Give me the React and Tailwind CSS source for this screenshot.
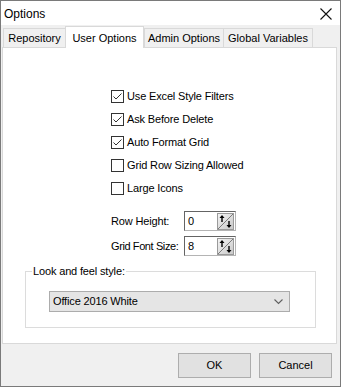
import React from "react";

function Check({ checked }) {
  return (
    <span className="w-[13px] h-[13px] border border-[#333333] bg-white flex items-center justify-center shrink-0">
      {checked && (
        <svg width="11" height="11" viewBox="0 0 11 11">
          <path d="M1.5 5.5 L4 8 L9.5 2.5" fill="none" stroke="#333333" strokeWidth="1" />
        </svg>
      )}
    </span>
  );
}

function Spinner() {
  return (
    <svg width="17" height="17" viewBox="0 0 17 17" className="shrink-0">
      <defs>
        <linearGradient id="sg" x1="0" y1="0" x2="1" y2="1">
          <stop offset="0" stopColor="#f4f4f4" />
          <stop offset="1" stopColor="#c8c8c8" />
        </linearGradient>
      </defs>
      <rect x="0.5" y="0.5" width="16" height="16" fill="url(#sg)" stroke="#9a9a9a" />
      <line x1="1" y1="16" x2="16" y2="1" stroke="#7a7a7a" strokeWidth="1" />
      <path d="M5 9 V3" stroke="#000" strokeWidth="1.4" />
      <path d="M2.5 5 L5 2 L7.5 5 Z" fill="#000" />
      <path d="M12 8 V14" stroke="#000" strokeWidth="1.4" />
      <path d="M9.5 12 L12 15 L14.5 12 Z" fill="#000" />
    </svg>
  );
}

function NumBox({ value }) {
  return (
    <div className="w-[52px] h-[20px] bg-white border border-[#646464] border-r-[#b4b4b4] border-b-[#b4b4b4] flex items-center justify-between pl-[3px] pr-[1px]">
      <span>{value}</span>
      <Spinner />
    </div>
  );
}

export default function App() {
  const checks = [
    ["Use Excel Style Filters", true],
    ["Ask Before Delete", true],
    ["Auto Format Grid", true],
    ["Grid Row Sizing Allowed", false],
    ["Large Icons", false],
  ];
  return (
    <div className="w-[341px] h-[387px] bg-[#f0f0f0] border border-[#7a7a7a] flex flex-col font-['Liberation_Sans',Arial,sans-serif] text-[11px] text-black overflow-hidden">
      {/* Title bar */}
      <div className="h-[24px] bg-white flex items-center justify-between pl-[3px] pr-[8px] shrink-0">
        <span className="text-[12px] leading-none mt-[1px]">Options</span>
        <svg width="12" height="12" viewBox="0 0 12 12" className="mt-[2px]">
          <path d="M0.5 0.5 L11.5 11.5 M11.5 0.5 L0.5 11.5" stroke="#111" strokeWidth="1.1" />
        </svg>
      </div>

      {/* Tabs */}
      <div className="flex items-end h-[22px] pl-[2px] relative z-10 shrink-0 whitespace-nowrap">
        <div className="w-[63px] h-[19px] border border-b-0 border-[#d9d9d9] bg-[#f0f0f0] flex items-center justify-center">Repository</div>
        <div className="w-[79px] h-[22px] -ml-[1px] -mb-[1px] border border-b-0 border-[#d9d9d9] bg-white flex items-start justify-center pt-[3px] relative z-10">User Options</div>
        <div className="w-[80px] h-[19px] border border-b-0 border-[#d9d9d9] bg-[#f0f0f0] flex items-center justify-center">Admin Options</div>
        <div className="w-[90px] h-[19px] -ml-[1px] border border-b-0 border-[#d9d9d9] bg-[#f0f0f0] flex items-center justify-center">Global Variables</div>
      </div>

      {/* Panel */}
      <div className="ml-[1px] w-[335px] h-[297px] bg-white border border-[#d9d9d9] shrink-0 flex flex-col whitespace-nowrap tracking-[-0.15px]">
        <div className="ml-[108px] mt-[37px] flex flex-col">
          {checks.map(([label, c]) => (
            <div key={label} className="h-[23px] flex items-center gap-[3px]">
              <Check checked={c} />
              <span>{label}</span>
            </div>
          ))}
        </div>
        <div className="ml-[108px] mt-[11px] flex flex-col gap-[5px]">
          <div className="flex items-center">
            <span className="w-[73px]">Row Height:</span>
            <NumBox value="0" />
          </div>
          <div className="flex items-center">
            <span className="w-[73px] tracking-[-0.4px]">Grid Font Size:</span>
            <NumBox value="8" />
          </div>
        </div>
        <div className="ml-[22px] mt-[15px] w-[291px] h-[57px] border border-[#dcdcdc] relative pl-[23px] pt-[19px]">
          <span className="absolute left-[6px] -top-[7px] bg-white px-[1px] leading-[13px]">Look and feel style:</span>
          <div className="w-[241px] h-[21px] bg-[#e5e5e5] border border-[#acacac] flex items-center justify-between pl-[3px] pr-[6px]">
            <span>Office 2016 White</span>
            <svg width="9" height="6" viewBox="0 0 9 6">
              <path d="M0.5 0.5 L4.5 4.5 L8.5 0.5" fill="none" stroke="#606060" strokeWidth="1.1" />
            </svg>
          </div>
        </div>
      </div>

      {/* Buttons */}
      <div className="flex justify-end gap-[8px] mt-[9px] pr-[8px]">
        <button className="w-[73px] h-[25px] bg-[#e1e1e1] border border-[#adadad]">OK</button>
        <button className="w-[73px] h-[25px] bg-[#e1e1e1] border border-[#adadad]">Cancel</button>
      </div>
    </div>
  );
}
